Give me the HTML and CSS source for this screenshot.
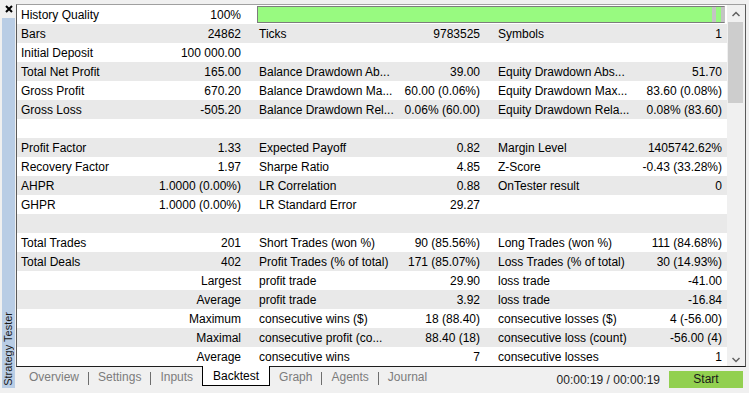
FILE: index.html
```html
<!DOCTYPE html>
<html lang="en">
<head>
    <meta charset="UTF-8">
    <meta name="viewport" content="width=device-width, initial-scale=1.0">
    <title>Strategy Tester</title>
    <link rel="stylesheet" href="styles.css">
</head>
<body>
    <div class="window">
        <div class="side">
            <div class="close">
                <svg width="8" height="8" viewBox="0 0 8 8"><path d="M1 1L7 7M7 1L1 7" stroke="#000" stroke-width="2"/></svg>
            </div>
            <div class="side-bar"><span class="side-title">Strategy Tester</span></div>
        </div>

        <div class="main">
            <div class="frame">
                <div class="report">
                    <div class="row">
                        <div class="lbl">History Quality</div><div class="val">100%</div>
                        <div class="quality"></div>
                    </div>
                    <div class="row">
                        <div class="lbl">Bars</div><div class="val">24862</div>
                        <div class="lbl">Ticks</div><div class="val">9783525</div>
                        <div class="lbl">Symbols</div><div class="val">1</div>
                    </div>
                    <div class="row">
                        <div class="lbl">Initial Deposit</div><div class="val">100 000.00</div>
                        <div class="lbl"></div><div class="val"></div>
                        <div class="lbl"></div><div class="val"></div>
                    </div>
                    <div class="row">
                        <div class="lbl">Total Net Profit</div><div class="val">165.00</div>
                        <div class="lbl">Balance Drawdown Ab...</div><div class="val">39.00</div>
                        <div class="lbl">Equity Drawdown Abs...</div><div class="val">51.70</div>
                    </div>
                    <div class="row">
                        <div class="lbl">Gross Profit</div><div class="val">670.20</div>
                        <div class="lbl">Balance Drawdown Ma...</div><div class="val">60.00 (0.06%)</div>
                        <div class="lbl">Equity Drawdown Max...</div><div class="val">83.60 (0.08%)</div>
                    </div>
                    <div class="row">
                        <div class="lbl">Gross Loss</div><div class="val">-505.20</div>
                        <div class="lbl">Balance Drawdown Rel...</div><div class="val">0.06% (60.00)</div>
                        <div class="lbl">Equity Drawdown Rela...</div><div class="val">0.08% (83.60)</div>
                    </div>
                    <div class="row"></div>
                    <div class="row">
                        <div class="lbl">Profit Factor</div><div class="val">1.33</div>
                        <div class="lbl">Expected Payoff</div><div class="val">0.82</div>
                        <div class="lbl">Margin Level</div><div class="val">1405742.62%</div>
                    </div>
                    <div class="row">
                        <div class="lbl">Recovery Factor</div><div class="val">1.97</div>
                        <div class="lbl">Sharpe Ratio</div><div class="val">4.85</div>
                        <div class="lbl">Z-Score</div><div class="val">-0.43 (33.28%)</div>
                    </div>
                    <div class="row">
                        <div class="lbl">AHPR</div><div class="val">1.0000 (0.00%)</div>
                        <div class="lbl">LR Correlation</div><div class="val">0.88</div>
                        <div class="lbl">OnTester result</div><div class="val">0</div>
                    </div>
                    <div class="row">
                        <div class="lbl">GHPR</div><div class="val">1.0000 (0.00%)</div>
                        <div class="lbl">LR Standard Error</div><div class="val">29.27</div>
                        <div class="lbl"></div><div class="val"></div>
                    </div>
                    <div class="row"></div>
                    <div class="row">
                        <div class="lbl">Total Trades</div><div class="val">201</div>
                        <div class="lbl">Short Trades (won %)</div><div class="val">90 (85.56%)</div>
                        <div class="lbl">Long Trades (won %)</div><div class="val">111 (84.68%)</div>
                    </div>
                    <div class="row">
                        <div class="lbl">Total Deals</div><div class="val">402</div>
                        <div class="lbl">Profit Trades (% of total)</div><div class="val">171 (85.07%)</div>
                        <div class="lbl">Loss Trades (% of total)</div><div class="val">30 (14.93%)</div>
                    </div>
                    <div class="row">
                        <div class="lbl"></div><div class="val">Largest</div>
                        <div class="lbl">profit trade</div><div class="val">29.90</div>
                        <div class="lbl">loss trade</div><div class="val">-41.00</div>
                    </div>
                    <div class="row">
                        <div class="lbl"></div><div class="val">Average</div>
                        <div class="lbl">profit trade</div><div class="val">3.92</div>
                        <div class="lbl">loss trade</div><div class="val">-16.84</div>
                    </div>
                    <div class="row">
                        <div class="lbl"></div><div class="val">Maximum</div>
                        <div class="lbl">consecutive wins ($)</div><div class="val">18 (88.40)</div>
                        <div class="lbl">consecutive losses ($)</div><div class="val">4 (-56.00)</div>
                    </div>
                    <div class="row">
                        <div class="lbl"></div><div class="val">Maximal</div>
                        <div class="lbl">consecutive profit (co...</div><div class="val">88.40 (18)</div>
                        <div class="lbl">consecutive loss (count)</div><div class="val">-56.00 (4)</div>
                    </div>
                    <div class="row">
                        <div class="lbl"></div><div class="val">Average</div>
                        <div class="lbl">consecutive wins</div><div class="val">7</div>
                        <div class="lbl">consecutive losses</div><div class="val">1</div>
                    </div>
                </div>

                <div class="scroll">
                    <div class="arrow">
                        <svg width="8" height="6" viewBox="0 0 8 6"><path d="M0.5 5L4 1.5L7.5 5" fill="none" stroke="#606060" stroke-width="1.5"/></svg>
                    </div>
                    <div class="thumb"></div>
                    <div class="arrow down">
                        <svg width="8" height="6" viewBox="0 0 8 6"><path d="M0.5 1L4 4.5L7.5 1" fill="none" stroke="#606060" stroke-width="1.5"/></svg>
                    </div>
                </div>
            </div>

            <div class="tabs">
                <span class="tab">Overview</span><span class="sep"></span>
                <span class="tab">Settings</span><span class="sep"></span>
                <span class="tab">Inputs</span>
                <span class="tab active">Backtest</span>
                <span class="tab">Graph</span><span class="sep"></span>
                <span class="tab">Agents</span><span class="sep"></span>
                <span class="tab">Journal</span>
                <span class="timer">00:00:19 / 00:00:19</span>
                <span class="start">Start</span>
            </div>
        </div>
    </div>
</body>
</html>
```

FILE: styles.css
```css
* {
    margin: 0;
    padding: 0;
    box-sizing: border-box;
}
body {
    background: #f0f0f0;
    font-family: "Liberation Sans", Arial, sans-serif;
    font-size: 12px;
    color: #000;
}
.window {
    display: flex;
    height: 393px;
    width: 749px;
    overflow: hidden;
}

/* left docked title */
.side {
    width: 13px;
    margin: 0 1px 0 2px;
    display: flex;
    flex-direction: column;
}
.close {
    height: 18px;
    padding: 5px 0 0 3px;
}
.close svg {
    display: block;
}
.side-bar {
    flex: 1;
    margin-bottom: 5px;
    background: #b9cde5;
    display: flex;
    flex-direction: column;
    justify-content: flex-end;
    align-items: center;
    padding-bottom: 2px;
}
.side-title {
    writing-mode: vertical-rl;
    transform: rotate(180deg);
    font-size: 11px;
    line-height: 13px;
    color: #1a1a1a;
    white-space: nowrap;
}

/* report */
.main {
    width: 730px;
    margin-top: 4px;
    display: flex;
    flex-direction: column;
}
.frame {
    display: flex;
    border-top: 1px solid #a0a0a0;
    border-left: 1px solid #5a5a5a;
    border-right: 1px solid #5a5a5a;
    border-bottom: 1px solid #1e1e1e;
    height: 363px;
}
.report {
    width: 710px;
    background: #fff;
}
.row {
    display: grid;
    grid-template-columns: 134px 104px 136px 103px 134px 99px;
    height: 19px;
    line-height: 20px;
    white-space: nowrap;
}
.row:nth-child(even) {
    background: #e9e9e9;
}
.lbl {
    padding-left: 4px;
}
.val {
    text-align: right;
    padding-right: 14px;
}
.val:last-child {
    padding-right: 5px;
}
.quality {
    grid-column: 3 / 7;
    margin: 1px 2px 2px 2px;
    border: 1px solid #7c7c7c;
    border-right-color: #c4c4c4;
    background: linear-gradient(to right, #98fa80 0 454px, #c4c4c4 454px 458px, #98fa80 458px 463px, #c4c4c4 463px);
}

.scroll {
    width: 18px;
    background: #f0f0f0;
    display: flex;
    flex-direction: column;
}
.arrow {
    height: 17px;
    display: flex;
    align-items: center;
    justify-content: center;
    padding-right: 1px;
}
.arrow.down {
    margin-top: auto;
    padding-top: 4px;
}
.thumb {
    height: 81px;
    margin: 0 2px 0 1px;
    background: #cdcdcd;
}

/* bottom tab strip */
.tabs {
    display: flex;
    align-items: flex-start;
    height: 21px;
    padding: 0 3px 0 4px;
    white-space: nowrap;
}
.tab {
    height: 20px;
    line-height: 21px;
    padding: 0 9px;
    color: #7c7c7c;
}
.tab.active {
    color: #000;
    background: #fff;
    border: 1px solid #000;
    border-top: none;
    padding: 0 10px;
    margin-top: -1px;
    height: 20px;
    line-height: 21px;
}
.sep {
    width: 1px;
    height: 13px;
    margin-top: 5px;
    background: #6e6e6e;
}
.timer {
    margin-left: auto;
    margin-top: 4px;
    line-height: 18px;
    color: #1e1e1e;
    padding-right: 9px;
}
.start {
    width: 74px;
    height: 17px;
    margin-top: 4px;
    line-height: 17px;
    text-align: center;
    background: #92d050;
    color: #1a1a1a;
}
```
